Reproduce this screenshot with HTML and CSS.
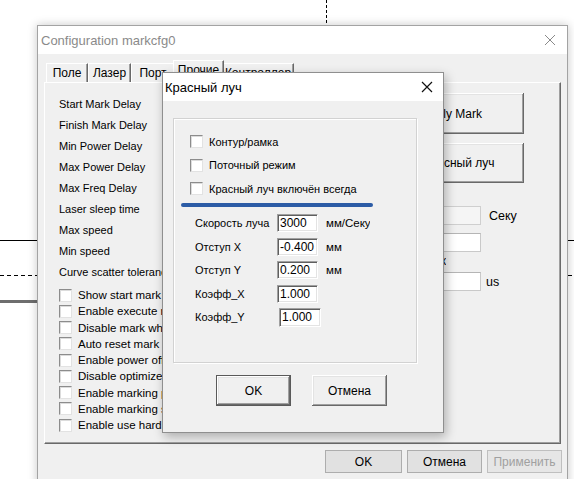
FILE: index.html
```html
<!DOCTYPE html>
<html>
<head>
<meta charset="utf-8">
<link rel="stylesheet" href="styles.css">
</head>
<body>
<div class="desktop">
  <div class="bgline vdash"></div>
  <div class="bgline hsolid-l"></div>
  <div class="bgline hdash-l"></div>
  <div class="bgline hbar-l"></div>
  <div class="bgline hsolid-r"></div>
  <div class="bgline hdash-r"></div>

  <div class="win main">
    <div class="titlebar">
      <span class="title inactive">Configuration markcfg0</span>
      <svg class="close gray" width="12" height="12" viewBox="0 0 12 12"><path d="M1 1L11 11M11 1L1 11" stroke="#8a8a8a" stroke-width="1"/></svg>
    </div>
    <div class="body">
      <div class="tabs">
        <div class="tab w42">Поле</div>
        <div class="tab w43">Лазер</div>
        <div class="tab w44">Порт</div>
        <div class="tab sel">Прочие</div>
        <div class="tab w72">Контроллер</div>
      </div>
      <div class="panel">
        <div class="leftcol">
          <div class="lbl">Start Mark Delay</div>
          <div class="lbl">Finish Mark Delay</div>
          <div class="lbl">Min Power Delay</div>
          <div class="lbl">Max Power Delay</div>
          <div class="lbl">Max Freq Delay</div>
          <div class="lbl">Laser sleep time</div>
          <div class="lbl">Max speed</div>
          <div class="lbl">Min speed</div>
          <div class="lbl">Curve scatter tolerance</div>
          <div class="checks">
            <div class="chk"><span class="box"></span>Show start mark dialog</div>
            <div class="chk"><span class="box"></span>Enable execute mark</div>
            <div class="chk"><span class="box"></span>Disable mark when error</div>
            <div class="chk"><span class="box"></span>Auto reset mark count</div>
            <div class="chk"><span class="box"></span>Enable power off when</div>
            <div class="chk"><span class="box"></span>Disable optimize when</div>
            <div class="chk"><span class="box"></span>Enable marking pause</div>
            <div class="chk"><span class="box"></span>Enable marking stop</div>
            <div class="chk"><span class="box"></span>Enable use hard input</div>
          </div>
        </div>
        <div class="rightcol">
          <div class="btn3d big">Fly Mark</div>
          <div class="btn3d big second">Красный луч</div>
          <div class="rrow r1"><span class="field dis"></span><span class="unit">Секу</span></div>
          <div class="rrow r2"><span class="field"></span></div>
          <div class="rlabel">Задержк</div>
          <div class="rrow r3"><span class="field"></span><span class="unit us">us</span></div>
        </div>
      </div>
      <div class="footer">
        <div class="wbtn w77">OK</div>
        <div class="wbtn">Отмена</div>
        <div class="wbtn disabled">Применить</div>
      </div>
    </div>
  </div>

  <div class="win dialog">
    <div class="titlebar dlgtitle">
      <span class="title">Красный луч</span>
      <svg class="close" width="12" height="12" viewBox="0 0 12 12"><path d="M1 1L11 11M11 1L1 11" stroke="#111" stroke-width="1.2"/></svg>
    </div>
    <div class="dbody">
      <div class="group">
        <div class="dchk"><span class="box"></span>Контур/рамка</div>
        <div class="dchk"><span class="box"></span>Поточный режим</div>
        <div class="dchk"><span class="box"></span>Красный луч включён всегда</div>
        <div class="blueline"></div>
        <div class="frow"><span class="flbl">Скорость луча</span><span class="inp">3000</span><span class="funit">мм/Секу</span></div>
        <div class="frow"><span class="flbl">Отступ X</span><span class="inp">-0.400</span><span class="funit">мм</span></div>
        <div class="frow"><span class="flbl">Отступ Y</span><span class="inp">0.200</span><span class="funit">мм</span></div>
        <div class="frow"><span class="flbl">Коэфф_X</span><span class="inp">1.000</span></div>
        <div class="frow"><span class="flbl">Коэфф_Y</span><span class="inp shift">1.000</span></div>
      </div>
      <div class="dbtns">
        <div class="btn3d dbtn def">OK</div>
        <div class="btn3d dbtn">Отмена</div>
      </div>
    </div>
  </div>
</div>
</body>
</html>
```

FILE: styles.css
```css
html, body {
  margin: 0;
  padding: 0;
  background: #ffffff;
}
.desktop {
  position: relative;
  width: 574px;
  height: 479px;
  overflow: hidden;
  font-family: "Liberation Sans", Arial, sans-serif;
  color: #000;
}
.bgline { position: absolute; }
.vdash {
  left: 326px; top: 0; width: 1px; height: 25px;
  background: repeating-linear-gradient(to bottom, #000 0 3px, transparent 3px 5px);
}
.hsolid-l { left: 0; top: 240px; width: 37px; height: 1px; background: #000; }
.hdash-l {
  left: 0; top: 275px; width: 37px; height: 1px;
  background: repeating-linear-gradient(to right, #000 0 4px, transparent 4px 7px);
}
.hbar-l { left: 0; top: 300px; width: 37px; height: 3px; background: #6e6e6e; }
.hsolid-r { left: 568px; top: 240px; width: 6px; height: 1px; background: #000; }
.hdash-r {
  left: 568px; top: 275px; width: 6px; height: 1px;
  background: repeating-linear-gradient(to right, #000 0 4px, transparent 4px 7px);
}

.win {
  position: absolute;
  box-sizing: border-box;
  background: #f0f0f0;
}
.main {
  left: 37px; top: 25px; width: 531px; height: 470px;
  border: 1px solid #a3a3a3;
  box-shadow: 0 0 9px rgba(0,0,0,0.22);
}
.titlebar {
  height: 28px;
  background: #ffffff;
  display: flex;
  align-items: center;
  justify-content: space-between;
  padding: 0 11px 0 3px;
}
.title {
  font-size: 13px;
  padding-top: 1px;
}
.title.inactive { color: #8a8a8a; }
.close { display: block; }

.body {
  padding: 6px 6px 0 6px;
}
.tabs {
  display: flex;
  align-items: flex-end;
  height: 22px;
  padding-left: 2px;
  position: relative;
  z-index: 2;
}
.tab {
  box-sizing: border-box;
  height: 19px;
  font-size: 12px;
  text-align: center;
  line-height: 18px;
  background: #f0f0f0;
  border-top: 1px solid #ffffff;
  border-left: 1px solid #ffffff;
  border-right: 1px solid #696969;
  box-shadow: inset -1px 0 #a0a0a0;
  white-space: nowrap;
  overflow: hidden;
}
.w42 { width: 42px; }
.w43 { width: 43px; }
.w44 { width: 44px; }
.w72 { width: 72px; }
.tab.sel {
  width: 51px;
  height: 23px;
  margin: 0 -2px -1px -2px;
  line-height: 19px;
  position: relative;
  z-index: 3;
}

.panel {
  box-sizing: border-box;
  height: 362px;
  border-top: 1px solid #ffffff;
  border-left: 1px solid #ffffff;
  border-right: 1px solid #696969;
  border-bottom: 1px solid #696969;
  box-shadow: inset -1px -1px #a0a0a0;
  display: flex;
  padding: 11px 0 0 14px;
}
.leftcol {
  width: 335px;
  flex: none;
  font-size: 11px;
}
.lbl {
  height: 21px;
  line-height: 21px;
  white-space: nowrap;
}
.checks { margin-top: 4px; }
.chk {
  height: 16.25px;
  display: flex;
  align-items: center;
  white-space: nowrap;
  font-size: 11.5px;
}
.box {
  box-sizing: border-box;
  display: inline-block;
  width: 13px;
  height: 13px;
  background: #fff;
  border: 1px solid;
  border-color: #8c8c8c #e2e2e2 #e2e2e2 #8c8c8c;
  box-shadow: inset 1px 1px #dcdcdc;
  margin-right: 6px;
  flex: none;
}

.rightcol {
  width: 160px;
  flex: none;
  font-size: 12px;
}
.btn3d {
  box-sizing: border-box;
  background: #f0f0f0;
  display: flex;
  align-items: center;
  justify-content: center;
  box-shadow: inset -1px -1px #696969, inset 1px 1px #ffffff, inset -2px -2px #a0a0a0, inset 2px 2px #e3e3e3;
}
.big {
  width: 130px;
  height: 41px;
  margin-top: -1px;
  font-size: 12px;
}
.big.second { margin-top: 9px; height: 40px; }
.rrow {
  display: flex;
  align-items: center;
  padding-left: 27px;
}
.r1 { margin-top: 23px; }
.r2 { margin-top: 8px; }
.r3 { margin-top: 0px; }
.field {
  box-sizing: border-box;
  display: inline-block;
  width: 60px;
  height: 19px;
  background: #ffffff;
  border: 1px solid #c9c9c9;
  border-top-color: #b5b5b5;
}
.field.dis { background: #f5f5f5; border-color: #cfcfcf; }
.unit { margin-left: 8px; font-size: 12.5px; }
.unit.us { margin-left: 5px; }
.rlabel {
  width: 52px;
  height: 20px;
  line-height: 18px;
  text-align: right;
  overflow: hidden;
  white-space: nowrap;
  font-size: 12px;
  direction: rtl;
}

.footer {
  display: flex;
  justify-content: flex-end;
  gap: 5px;
  margin-top: 6px;
  margin-right: -1px;
}
.wbtn {
  box-sizing: border-box;
  width: 75px;
  height: 23px;
  border: 1px solid #adadad;
  background: #e1e1e1;
  font-size: 12px;
  display: flex;
  align-items: center;
  justify-content: center;
}
.wbtn.w77 { width: 77px; }
.wbtn.disabled { color: #a0a0a0; border-color: #bfbfbf; background: #e6e6e6; }

.dialog {
  left: 162px; top: 72px; width: 282px; height: 361px;
  border: 1px solid #8f8f8f;
  box-shadow: 2px 4px 10px rgba(0,0,0,0.28);
  z-index: 10;
}
.dlgtitle { padding: 0 10px 0 2px; }
.dbody {
  padding: 17px 0 0 10px;
}
.group {
  box-sizing: border-box;
  width: 244px;
  height: 245px;
  border: 1px solid #d2d2d2;
  box-shadow: inset 1px 1px #ffffff, 1px 1px #ffffff;
  padding: 11px 0 0 16px;
}
.dchk {
  height: 23.5px;
  display: flex;
  align-items: center;
  font-size: 11px;
  white-space: nowrap;
}
.blueline {
  width: 192px;
  height: 4px;
  border-radius: 2px;
  background: #2c5ca6;
  margin: 2px 0 0 -9px;
}
.frow {
  height: 23.5px;
  display: flex;
  align-items: center;
  font-size: 11px;
  padding-left: 5px;
  white-space: nowrap;
}
.blueline + .frow { margin-top: 5px; }
.flbl {
  width: 82px;
  flex: none;
}
.inp {
  box-sizing: border-box;
  width: 41px;
  height: 18px;
  background: #ffffff;
  border: 1px solid;
  border-color: #a0a0a0 #ffffff #ffffff #a0a0a0;
  box-shadow: inset 1px 1px #5f5f5f, inset -1px -1px #e3e3e3;
  font-size: 12px;
  line-height: 16px;
  padding-left: 2px;
  flex: none;
}
.inp.shift { margin-left: 2px; width: 42px; height: 19px; }
.funit {
  margin-left: 8px;
  font-size: 11.5px;
  width: 44px;
  overflow: hidden;
}
.dbtns {
  display: flex;
  gap: 21px;
  margin: 12px 0 0 43px;
}
.dbtn {
  width: 75px;
  height: 31px;
  font-size: 12px;
}
.dbtn.def {
  border: 1px solid #5a5a5a;
}
```
